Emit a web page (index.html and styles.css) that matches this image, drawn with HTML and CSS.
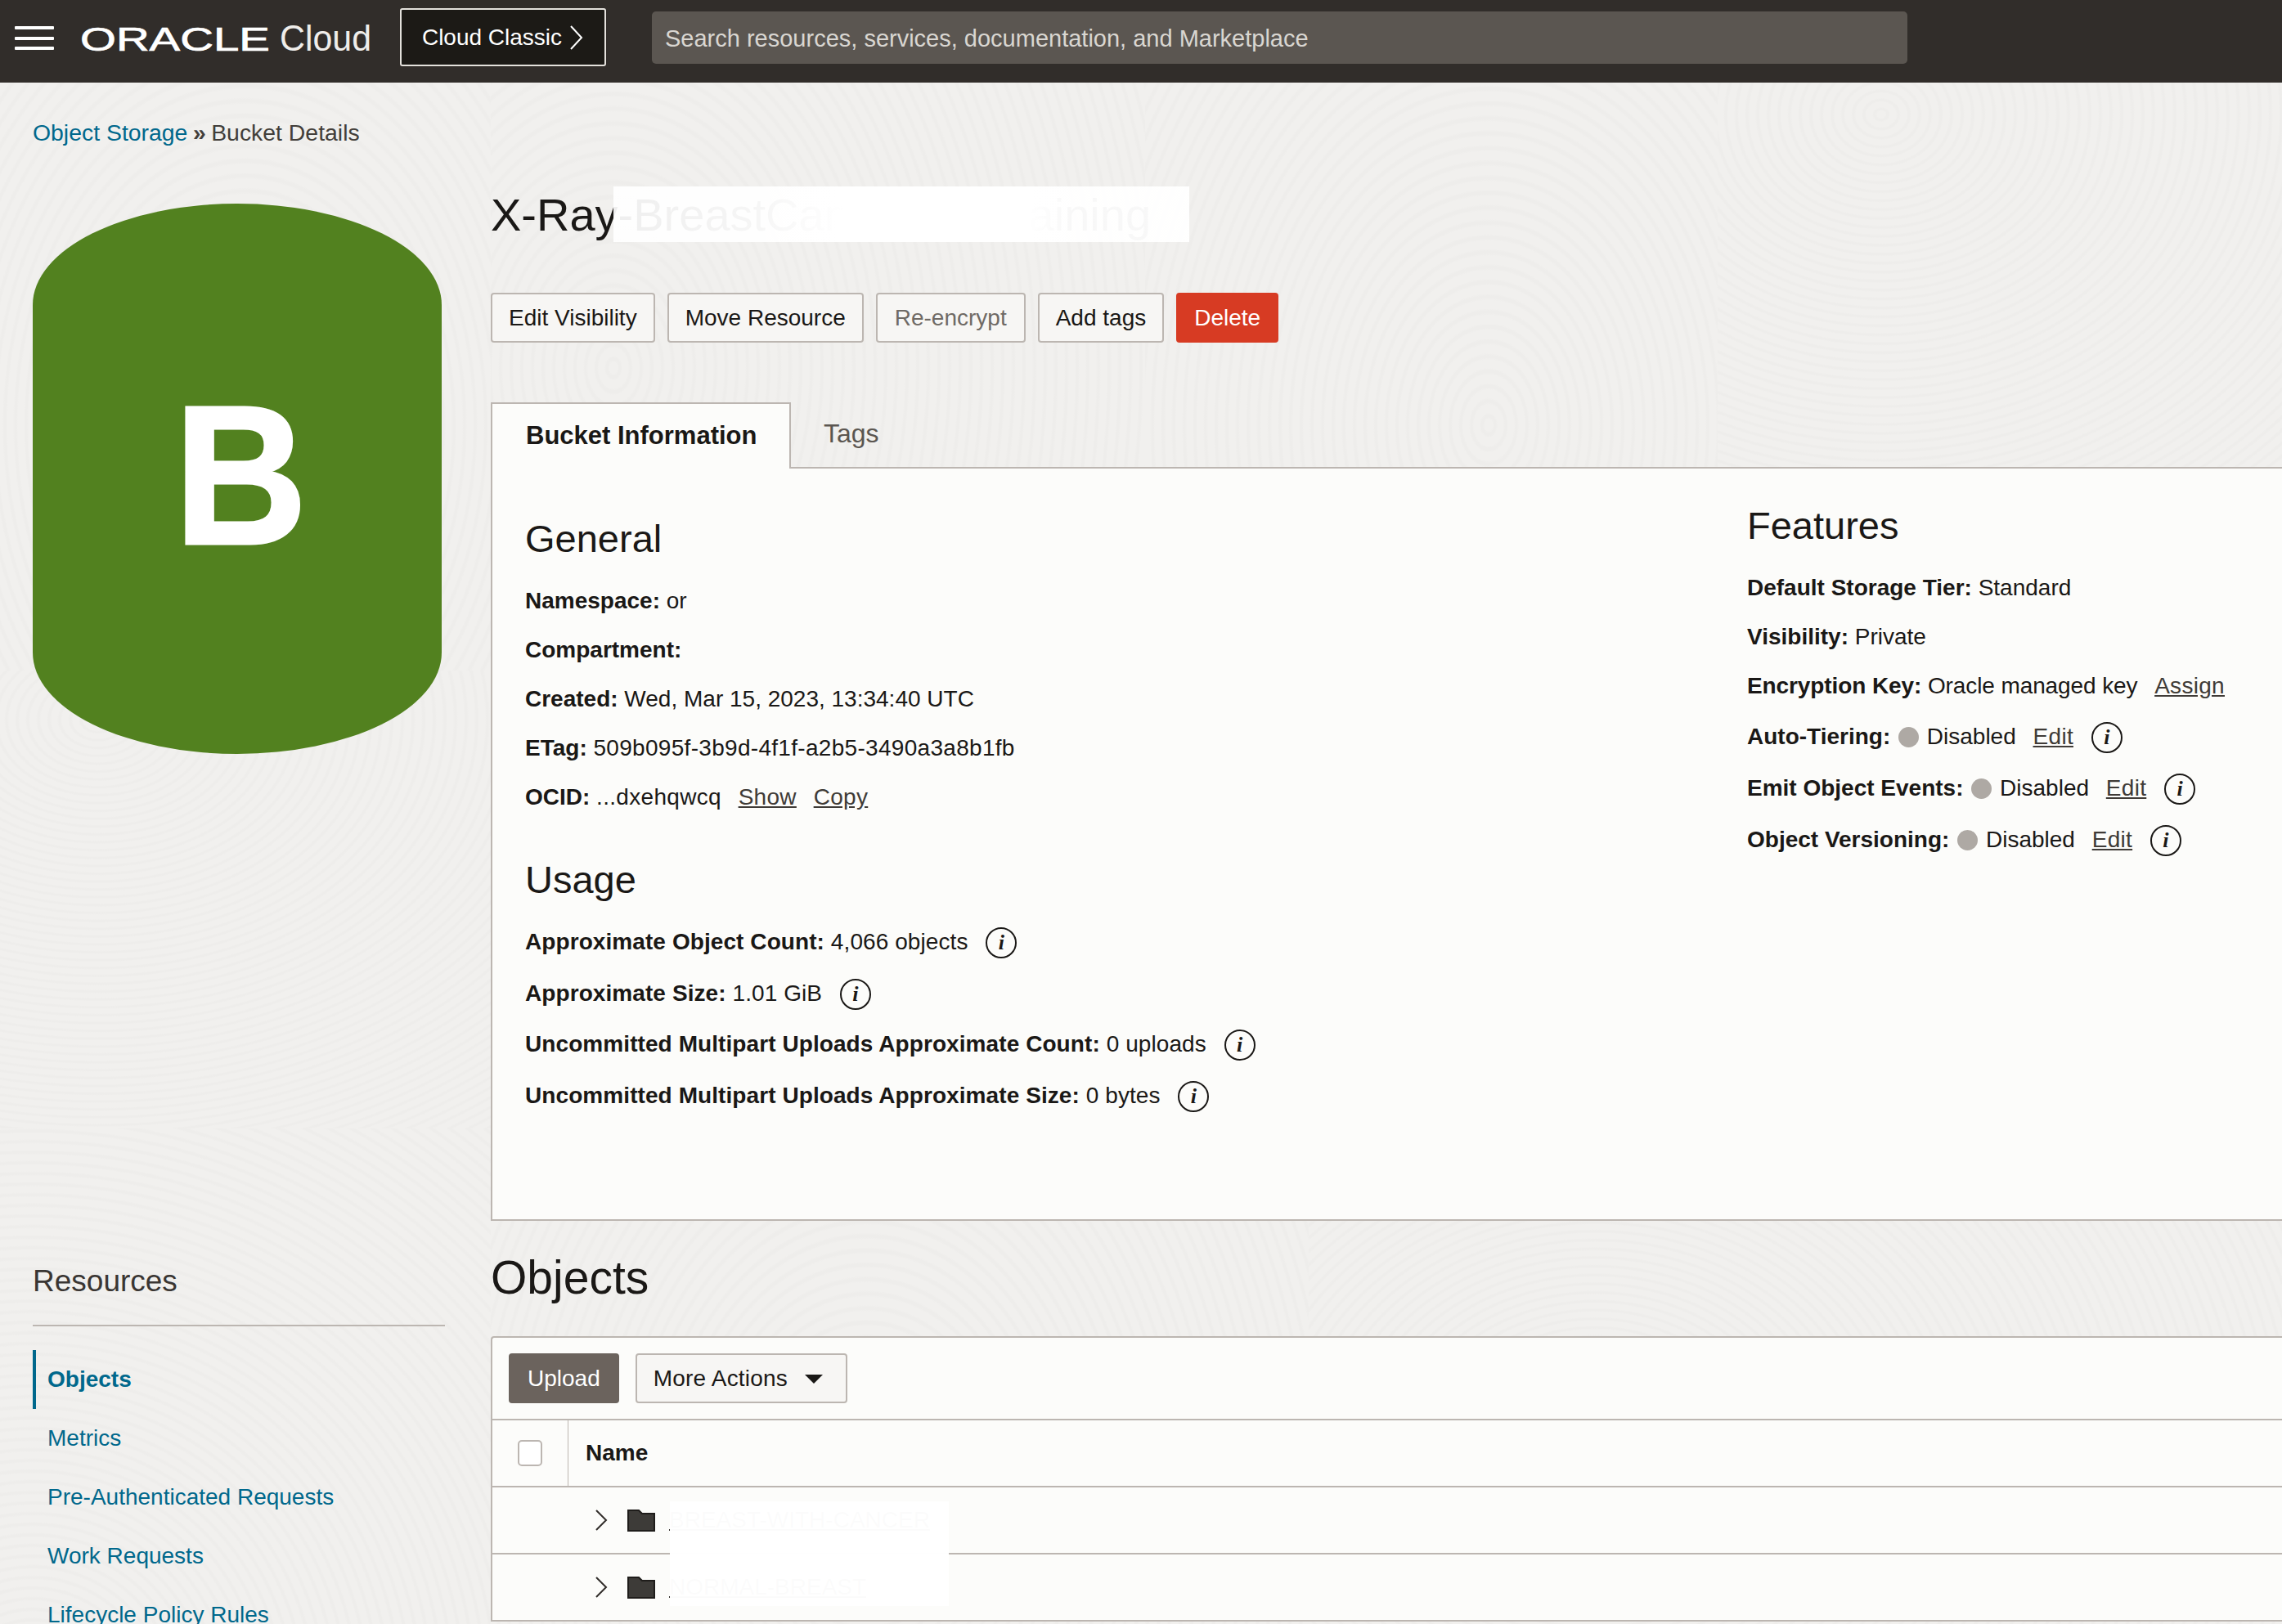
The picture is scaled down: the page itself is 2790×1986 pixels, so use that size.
FILE: index.html
```html
<!DOCTYPE html>
<html lang="en">
<head>
    <meta charset="UTF-8">
    <title>Bucket Details</title>
    <link rel="stylesheet" href="styles.css">
</head>
<body>
    <header class="topbar">
        <div class="burger"><span></span><span></span><span></span></div>
        <svg class="logo" width="362" height="60" viewBox="0 0 362 60">
            <text class="logo-oracle" x="0" y="52" textLength="232" lengthAdjust="spacingAndGlyphs">ORACLE</text>
            <text class="logo-cloud" x="244" y="52" textLength="112" lengthAdjust="spacingAndGlyphs">Cloud</text>
        </svg>
        <a class="classic-btn">Cloud Classic
            <svg width="18" height="30" viewBox="0 0 18 30"><path d="M2 1l13 14L2 29" fill="none" stroke="#fff" stroke-width="2"/></svg>
        </a>
        <div class="search">Search resources, services, documentation, and Marketplace</div>
    </header>

    <div class="page">
        <div class="crumbs"><a>Object Storage</a><b>»</b><span>Bucket Details</span></div>

        <div class="layout">
            <aside class="side">
                <div class="bucket-icon"><span>B</span></div>
                <h3 class="side-title">Resources</h3>
                <ul class="side-nav">
                    <li class="active">Objects</li>
                    <li>Metrics</li>
                    <li>Pre-Authenticated Requests</li>
                    <li>Work Requests</li>
                    <li>Lifecycle Policy Rules</li>
                </ul>
            </aside>

            <main class="content">
                <div class="title-row">
                    <h1>X-Ray-BreastCancer-AI-Training</h1>
                    <div class="mask mask-title"></div>
                </div>

                <div class="actions">
                    <button class="btn">Edit Visibility</button>
                    <button class="btn">Move Resource</button>
                    <button class="btn btn-muted">Re-encrypt</button>
                    <button class="btn">Add tags</button>
                    <button class="btn btn-danger">Delete</button>
                </div>

                <div class="tabs">
                    <div class="tab current">Bucket Information</div>
                    <div class="tab">Tags</div>
                </div>

                <section class="info">
                    <div class="info-left">
                        <h2>General</h2>
                        <p><b>Namespace:</b> or</p>
                        <p><b>Compartment:</b></p>
                        <p><b>Created:</b> Wed, Mar 15, 2023, 13:34:40 UTC</p>
                        <p><b>ETag:</b> <span class="etag">509b095f-3b9d-4f1f-a2b5-3490a3a8b1fb</span></p>
                        <p><b>OCID:</b> <span class="etag">...dxehqwcq</span> <a>Show</a> <a>Copy</a></p>

                        <h2 class="usage">Usage</h2>
                        <div class="usage-rows">
                            <p><b>Approximate Object Count:</b> 4,066 objects <i class="info-i">i</i></p>
                            <p><b>Approximate Size:</b> 1.01 GiB <i class="info-i">i</i></p>
                            <p><b>Uncommitted Multipart Uploads Approximate Count:</b> 0 uploads <i class="info-i">i</i></p>
                            <p><b>Uncommitted Multipart Uploads Approximate Size:</b> 0 bytes <i class="info-i">i</i></p>
                        </div>
                    </div>
                    <div class="info-right">
                        <h2>Features</h2>
                        <p><b>Default Storage Tier:</b> Standard</p>
                        <p><b>Visibility:</b> Private</p>
                        <p class="key"><b>Encryption Key:</b> Oracle managed key <a>Assign</a></p>
                        <p class="tall"><b>Auto-Tiering:</b> <span class="dot"></span> Disabled <a>Edit</a> <i class="info-i">i</i></p>
                        <p class="tall"><b>Emit Object Events:</b> <span class="dot"></span> Disabled <a>Edit</a> <i class="info-i">i</i></p>
                        <p class="tall"><b>Object Versioning:</b> <span class="dot"></span> Disabled <a>Edit</a> <i class="info-i">i</i></p>
                    </div>
                </section>

                <h2 class="objects-title">Objects</h2>

                <section class="objects">
                    <div class="toolbar">
                        <button class="btn btn-dark">Upload</button>
                        <button class="btn more-btn">More Actions <span class="caret"></span></button>
                    </div>
                    <div class="table-head">
                        <div class="check-col"><span class="check"></span></div>
                        <div class="name-col">Name</div>
                    </div>
                    <div class="table-row">
                        <svg class="chev" width="16" height="26" viewBox="0 0 16 26"><path d="M2 1l12 12L2 25" fill="none" stroke="#312d2a" stroke-width="2"/></svg>
                        <svg class="folder" width="34" height="27" viewBox="0 0 34 27"><path d="M1 1h13l4 4h15v21H1z" fill="#3d3b38" stroke="#1f1d1b" stroke-width="2"/></svg>
                        <a class="obj-name">BREAST-WITH-CANCER</a>
                    </div>
                    <div class="table-row">
                        <svg class="chev" width="16" height="26" viewBox="0 0 16 26"><path d="M2 1l12 12L2 25" fill="none" stroke="#312d2a" stroke-width="2"/></svg>
                        <svg class="folder" width="34" height="27" viewBox="0 0 34 27"><path d="M1 1h13l4 4h15v21H1z" fill="#3d3b38" stroke="#1f1d1b" stroke-width="2"/></svg>
                        <a class="obj-name">NORMAL-BREAST</a>
                    </div>
                    <div class="mask mask-rows"></div>
                </section>
            </main>
        </div>
    </div>
</body>
</html>
```

FILE: styles.css
```css
* {
    margin: 0;
    padding: 0;
    box-sizing: border-box;
}

html, body {
    height: 1986px;
    overflow: hidden;
}

body {
    font-family: "Liberation Sans", Arial, sans-serif;
    font-size: 28px;
    color: #1a1816;
    background-color: #f1f0ee;
    /* contour patches, each one stays in its own box */
    background-repeat: no-repeat;
    background-image:
        repeating-radial-gradient(ellipse 340px 480px at 300px 420px, #f1f0ee 0 5px, #eeedeb 7px 9px, #f1f0ee 11px 13px),
        repeating-radial-gradient(ellipse 460px 340px at 120px 60px, #f1f0ee 0 5px, #eeedeb 7px 9px, #f1f0ee 11px 13px),
        repeating-radial-gradient(ellipse 300px 300px at 40px 700px, #f1f0ee 0 5px, #eeedeb 7px 9px, #f1f0ee 11px 13px),
        repeating-radial-gradient(ellipse 260px 360px at 150px 350px, #f1f0ee 0 5px, #eeedeb 7px 9px, #f1f0ee 11px 13px),
        repeating-radial-gradient(ellipse 300px 420px at 420px 420px, #f1f0ee 0 5px, #eeedeb 7px 9px, #f1f0ee 11px 13px),
        repeating-radial-gradient(ellipse 380px 320px at 200px 40px, #f1f0ee 0 5px, #eeedeb 7px 9px, #f1f0ee 11px 13px),
        repeating-radial-gradient(ellipse 280px 380px at 460px 360px, #f1f0ee 0 5px, #eeedeb 7px 9px, #f1f0ee 11px 13px),
        repeating-radial-gradient(ellipse 340px 280px at 350px 300px, #f1f0ee 0 5px, #eeedeb 7px 9px, #f1f0ee 11px 13px);
    background-size:
        600px 720px, 600px 560px, 600px 620px, 800px 480px,
        700px 480px, 690px 480px, 1000px 1000px, 1190px 1000px;
    background-position:
        0 100px, 0 820px, 0 1380px, 600px 100px,
        1400px 100px, 2100px 100px, 600px 1480px, 1600px 1480px;
}

.topbar {
    height: 101px;
    background: #312d2a;
    display: flex;
    align-items: flex-start;
    color: white;
}

.burger {
    width: 48px;
    margin: 32px 0 0 18px;
    display: flex;
    flex-direction: column;
    gap: 8.5px;
}

.burger span {
    height: 4px;
    background: white;
    border-radius: 1px;
}

.logo {
    margin: 10px 0 0 32px;
    flex: none;
}

.logo-oracle {
    font-family: "Liberation Sans", sans-serif;
    font-size: 40px;
    fill: white;
    stroke: white;
    stroke-width: .7px;
}

.logo-cloud {
    font-family: "Liberation Sans", sans-serif;
    font-size: 44px;
    fill: #efedea;
}

.classic-btn {
    width: 252px;
    height: 71px;
    margin: 10px 0 0 29px;
    border: 2px solid #e4e1dc;
    border-radius: 3px;
    background: #1c1a16;
    display: flex;
    align-items: center;
    justify-content: center;
    gap: 9px;
    font-size: 28px;
    flex: none;
}

.search {
    width: 1535px;
    height: 64px;
    margin: 14px 0 0 56px;
    padding: 0 16px;
    border-radius: 5px;
    background: #5b5651;
    color: #d9d6d1;
    font-size: 29px;
    line-height: 66px;
    flex: none;
}

.page {
    padding: 42px 0 0 40px;
}

.crumbs {
    font-size: 28.4px;
    line-height: 38px;
    color: #423e3a;
    display: flex;
    gap: 6.5px;
}

.crumbs a {
    color: #00688c;
}

.layout {
    display: flex;
    margin-top: 6px;
}

.side {
    width: 560px;
    flex: none;
}

.bucket-icon {
    width: 500px;
    height: 673px;
    margin-top: 62px;
    border-radius: 250px / 124px;
    background: #52811f;
    color: white;
    font-size: 243px;
    font-weight: 700;
    -webkit-text-stroke: 3px white;
    display: flex;
    align-items: center;
    justify-content: center;
}

.bucket-icon span {
    transform: scaleX(.93);
    padding: 0 0 10px 10px;
}

.side-title {
    margin-top: 622px;
    font-size: 37px;
    font-weight: 400;
    line-height: 46px;
    color: #3a3633;
    padding-bottom: 30px;
    width: 504px;
    border-bottom: 2px solid #bcb6b1;
}

.side-nav {
    list-style: none;
    margin-top: 29px;
}

.side-nav li {
    height: 72px;
    line-height: 72px;
    padding-left: 18px;
    color: #00688c;
}

.side-nav .active {
    font-weight: 700;
    border-left: 4px solid #00688c;
    padding-left: 14px;
}

.content {
    flex: 1;
    min-width: 0;
}

.title-row {
    position: relative;
    height: 171px;
    padding-top: 30px;
}

h1 {
    font-size: 56px;
    font-weight: 400;
    line-height: 92px;
    white-space: nowrap;
}

.mask {
    position: absolute;
}

.mask-title {
    left: 150px;
    top: 41px;
    width: 704px;
    height: 68px;
    background: linear-gradient(90deg, rgba(255,255,255,.93), rgba(255,255,255,.96) 25%, #fff 40%, #fff 72%, rgba(255,255,255,.97) 80%);
}

.actions {
    display: flex;
    gap: 15px;
}

.btn {
    height: 61px;
    padding: 0 20px;
    font-family: "Liberation Sans", Arial, sans-serif;
    font-size: 28px;
    color: #1a1816;
    background: #f7f6f4;
    border: 2px solid #bcb6b1;
    border-radius: 4px;
}

.btn-muted {
    padding: 0 21px;
    color: #6f6a65;
}

.btn-danger {
    background: #d73b23;
    border-color: #d73b23;
    color: white;
}

.btn-dark {
    padding: 0 21px;
    background: #6b635d;
    border-color: #6b635d;
    color: white;
}

.more-btn {
    width: 259px;
    text-align: left;
    letter-spacing: .2px;
}

.caret {
    display: inline-block;
    margin-left: 13px;
    vertical-align: 3px;
    border-left: 11px solid transparent;
    border-right: 11px solid transparent;
    border-top: 11px solid #1a1816;
}

.tabs {
    display: flex;
    margin-top: 73px;
    height: 81px;
    border-bottom: 2px solid #bcb6b1;
}

.tab {
    padding: 0 40px;
    line-height: 76px;
    font-size: 32px;
    color: #5b5651;
}

.current {
    width: 367px;
    color: #1a1816;
    font-size: 31px;
    font-weight: 700;
    padding: 0 41px;
    background: #fcfcfa;
    border: 2px solid #bcb6b1;
    border-bottom: none;
    height: 81px;
    line-height: 78px;
    white-space: nowrap;
}

.info {
    height: 920px;
    background: #fcfcfa;
    border: 2px solid #bcb6b1;
    border-top: none;
    border-right: none;
    display: flex;
    padding-left: 40px;
}

.info-left {
    width: 1494px;
    padding-top: 54px;
}

.info-right {
    padding-top: 38px;
}

.info h2 {
    font-size: 47px;
    font-weight: 400;
    line-height: 64px;
    margin-bottom: 14px;
}

.info p {
    height: 60px;
    line-height: 60px;
    white-space: nowrap;
}

.info a {
    color: #3f3b37;
    text-decoration: underline;
    margin-left: 13px;
    letter-spacing: .3px;
}

.info .key {
    letter-spacing: -.1px;
}

.etag {
    letter-spacing: .3px;
}

.info h2.usage {
    margin-top: 39px;
    margin-bottom: 13px;
}

.usage-rows p {
    height: 62.7px;
    line-height: 62px;
    letter-spacing: .08px;
}

.info p.tall {
    height: 63px;
    line-height: 63px;
}

.info-i {
    display: inline-block;
    width: 38px;
    height: 38px;
    margin-left: 14px;
    border: 2px solid #1a1816;
    border-radius: 50%;
    font-family: "Liberation Serif", serif;
    font-size: 26px;
    font-weight: 700;
    line-height: 33px;
    text-align: center;
    vertical-align: 0;
}

.dot {
    display: inline-block;
    width: 25px;
    height: 25px;
    margin: 0 2px 0 2px;
    border-radius: 50%;
    background: #aea9a4;
    vertical-align: -4px;
}

.objects-title {
    font-size: 57px;
    font-weight: 400;
    line-height: 70px;
    margin-top: 34px;
}

.objects {
    position: relative;
    margin-top: 37px;
    background: #fcfcfa;
    border: 2px solid #bcb6b1;
    border-right: none;
    border-bottom: none;
    border-top-left-radius: 4px;
}

.toolbar {
    display: flex;
    gap: 20px;
    height: 101px;
    padding: 19px 0 0 20px;
    border-bottom: 2px solid #bcb6b1;
}

.table-head {
    height: 82px;
    display: flex;
    border-bottom: 2px solid #bcb6b1;
}

.check-col {
    width: 93px;
    border-right: 1px solid #bcb6b1;
    display: flex;
    align-items: center;
    justify-content: center;
}

.check {
    width: 30px;
    height: 32px;
    border: 2px solid #bcb6b1;
    border-radius: 5px;
    background: white;
}

.name-col {
    padding-left: 21px;
    line-height: 80px;
    font-weight: 700;
}

.table-row {
    height: 82px;
    display: flex;
    align-items: center;
    border-bottom: 2px solid #bcb6b1;
    padding-left: 125px;
}

.folder {
    margin-left: 24px;
}

.obj-name {
    margin-left: 17px;
    text-decoration: underline;
    color: #312d2a;
    white-space: nowrap;
}

.mask-rows {
    left: 217px;
    top: 200px;
    width: 341px;
    height: 128px;
    background: rgba(255,255,255,.985);
}
```
